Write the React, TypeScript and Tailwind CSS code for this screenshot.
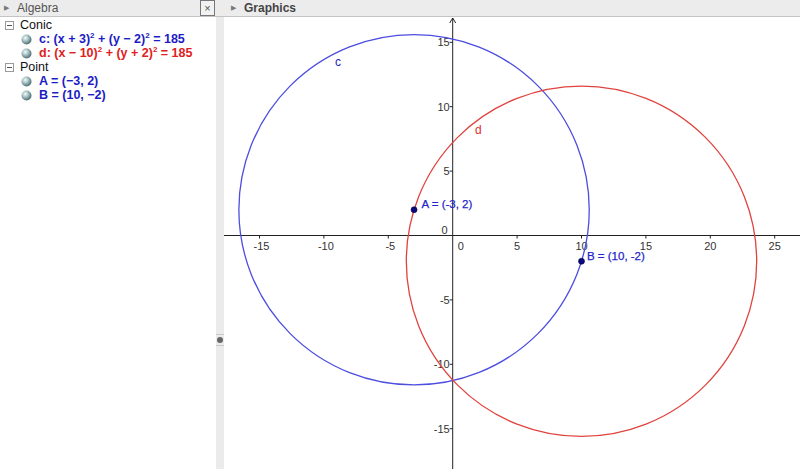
import React from 'react';

const OX = 452.7;
const OY = 235.5;
const S = 12.88;

const px = (x: number) => OX + x * S;
const py = (y: number) => OY - y * S;

const xTicks = [-15, -10, -5, 5, 10, 15, 20, 25];
const yTicks = [15, 10, 5, -5, -10, -15];

const FONT = "'Liberation Sans', Arial, sans-serif";

const Ball = () => (
    <svg width="11" height="11" viewBox="0 0 11 11" className="shrink-0">
        <defs>
            <radialGradient id="ball" cx="0.38" cy="0.35" r="0.65">
                <stop offset="0" stopColor="#f4fbfb" />
                <stop offset="0.45" stopColor="#a9c4c7" />
                <stop offset="1" stopColor="#4f6f74" />
            </radialGradient>
        </defs>
        <circle cx="5.5" cy="5.5" r="5" fill="url(#ball)" />
    </svg>
);

const Collapse = () => (
    <span className="w-[9px] h-[9px] border border-[#9a9a9a] bg-white flex items-center justify-center shrink-0">
        <span className="w-[5px] h-px bg-[#555]" />
    </span>
);

const Sq = () => <sup className="text-[8px] -top-[5px]">2</sup>;

const Graphics = () => (
    <svg width="576" height="452" viewBox="224 17 576 452" className="block">
        {/* axes */}
        <line x1="224" y1={OY} x2="800" y2={OY} stroke="#222" strokeWidth="1" />
        <line x1={OX} y1="18" x2={OX} y2="469" stroke="#222" strokeWidth="1" />
        <path d={`M${OX - 3} 23 L${OX} 18 L${OX + 3} 23`} fill="none" stroke="#222" strokeWidth="1" />

        {xTicks.map((t) => (
            <g key={t}>
                <line x1={px(t)} y1={OY} x2={px(t)} y2={OY + 3} stroke="#222" />
                <text x={px(t) + (t < 0 ? 2 : 0)} y={OY + 14.5} textAnchor="middle" fontSize="11" fill="#333" fontFamily={FONT}>
                    {t}
                </text>
            </g>
        ))}
        {yTicks.map((t) => (
            <g key={t}>
                <line x1={OX - 3} y1={py(t)} x2={OX} y2={py(t)} stroke="#222" />
                <text x={OX - 3} y={py(t) + 4} textAnchor="end" fontSize="11" fill="#333" fontFamily={FONT}>
                    {t}
                </text>
            </g>
        ))}
        <text x={OX - 5} y={OY - 2} textAnchor="end" fontSize="11" fill="#333" fontFamily={FONT}>0</text>
        <text x={OX + 5} y={OY + 14.5} fontSize="11" fill="#333" fontFamily={FONT}>0</text>

        {/* conics */}
        <circle cx={px(-3)} cy={py(2)} r={Math.sqrt(185) * S} fill="none" stroke="#4d4de0" strokeWidth="1.3" />
        <circle cx={px(10)} cy={py(-2)} r={Math.sqrt(185) * S} fill="none" stroke="#e0433e" strokeWidth="1.3" />
        <text x="335" y="66" fontSize="12" fill="#2020c8" fontFamily={FONT}>c</text>
        <text x="475" y="134" fontSize="12" fill="#e03030" fontFamily={FONT}>d</text>

        {/* points */}
        <circle cx={px(-3)} cy={py(2)} r="3" fill="#0a0a80" stroke="#000040" strokeWidth="0.6" />
        <circle cx={px(10)} cy={py(-2)} r="3" fill="#0a0a80" stroke="#000040" strokeWidth="0.6" />
        <text x="421.5" y="207.5" fontSize="11.5" fill="#2424c8" stroke="#2424c8" strokeWidth="0.25" fontFamily={FONT}>A = (-3, 2)</text>
        <text x="587" y="260" fontSize="11.5" fill="#2424c8" stroke="#2424c8" strokeWidth="0.25" fontFamily={FONT}>B = (10, -2)</text>
    </svg>
);

export default function App() {
    return (
        <div className="w-[800px] h-[469px] flex overflow-hidden bg-white font-['Liberation_Sans',Arial,sans-serif]">
            <div className="w-[216px] flex flex-col">
                <div className="h-[17px] bg-[#ececec] border-b border-[#c4c4c4] flex items-center relative">
                    <span className="ml-[4px] text-[7px] text-[#777]">▶</span>
                    <span className="ml-[8px] text-[12px] text-[#555] leading-none">Algebra</span>
                    <span className="absolute right-[1px] top-0 w-[15px] h-[16px] border border-[#777] bg-[#f2f2f2] flex items-center justify-center text-[11px] text-[#555] leading-none">×</span>
                </div>
                <div className="flex-1 pt-[1px] text-[12.5px] leading-[14px]">
                    <div className="flex items-center gap-[6px] pl-[5px] h-[14px]">
                        <Collapse />
                        <span className="text-[#111]">Conic</span>
                    </div>
                    <div className="flex items-center gap-[7px] pl-[21px] h-[14px] font-bold text-[#1c1cc4]">
                        <Ball />
                        <span>c: (x + 3)<Sq /> + (y − 2)<Sq /> = 185</span>
                    </div>
                    <div className="flex items-center gap-[7px] pl-[21px] h-[14px] font-bold text-[#e02020]">
                        <Ball />
                        <span>d: (x − 10)<Sq /> + (y + 2)<Sq /> = 185</span>
                    </div>
                    <div className="flex items-center gap-[6px] pl-[5px] h-[14px]">
                        <Collapse />
                        <span className="text-[#111]">Point</span>
                    </div>
                    <div className="flex items-center gap-[7px] pl-[21px] h-[14px] font-bold text-[#1c1cc4]">
                        <Ball />
                        <span>A = (−3, 2)</span>
                    </div>
                    <div className="flex items-center gap-[7px] pl-[21px] h-[14px] font-bold text-[#1c1cc4]">
                        <Ball />
                        <span>B = (10, −2)</span>
                    </div>
                </div>
            </div>
            <div className="flex-1 flex flex-col">
                <div className="h-[17px] bg-[#ececec] border-b border-[#c4c4c4] flex items-center">
                    <span className="ml-[15px] text-[7px] text-[#777]">▶</span>
                    <span className="ml-[8px] text-[12px] font-bold text-[#444] leading-none">Graphics</span>
                </div>
                <div className="flex-1 flex">
                    <div className="w-[8px] bg-[#ebebeb] flex flex-col items-center">
                        <div className="mt-[317px] w-full h-px bg-[#c8c8c8]" />
                        <div className="my-[2px] w-[6px] h-[6px] rounded-full bg-[#666]" />
                        <div className="w-full h-px bg-[#c8c8c8]" />
                    </div>
                    <Graphics />
                </div>
            </div>
        </div>
    );
}
